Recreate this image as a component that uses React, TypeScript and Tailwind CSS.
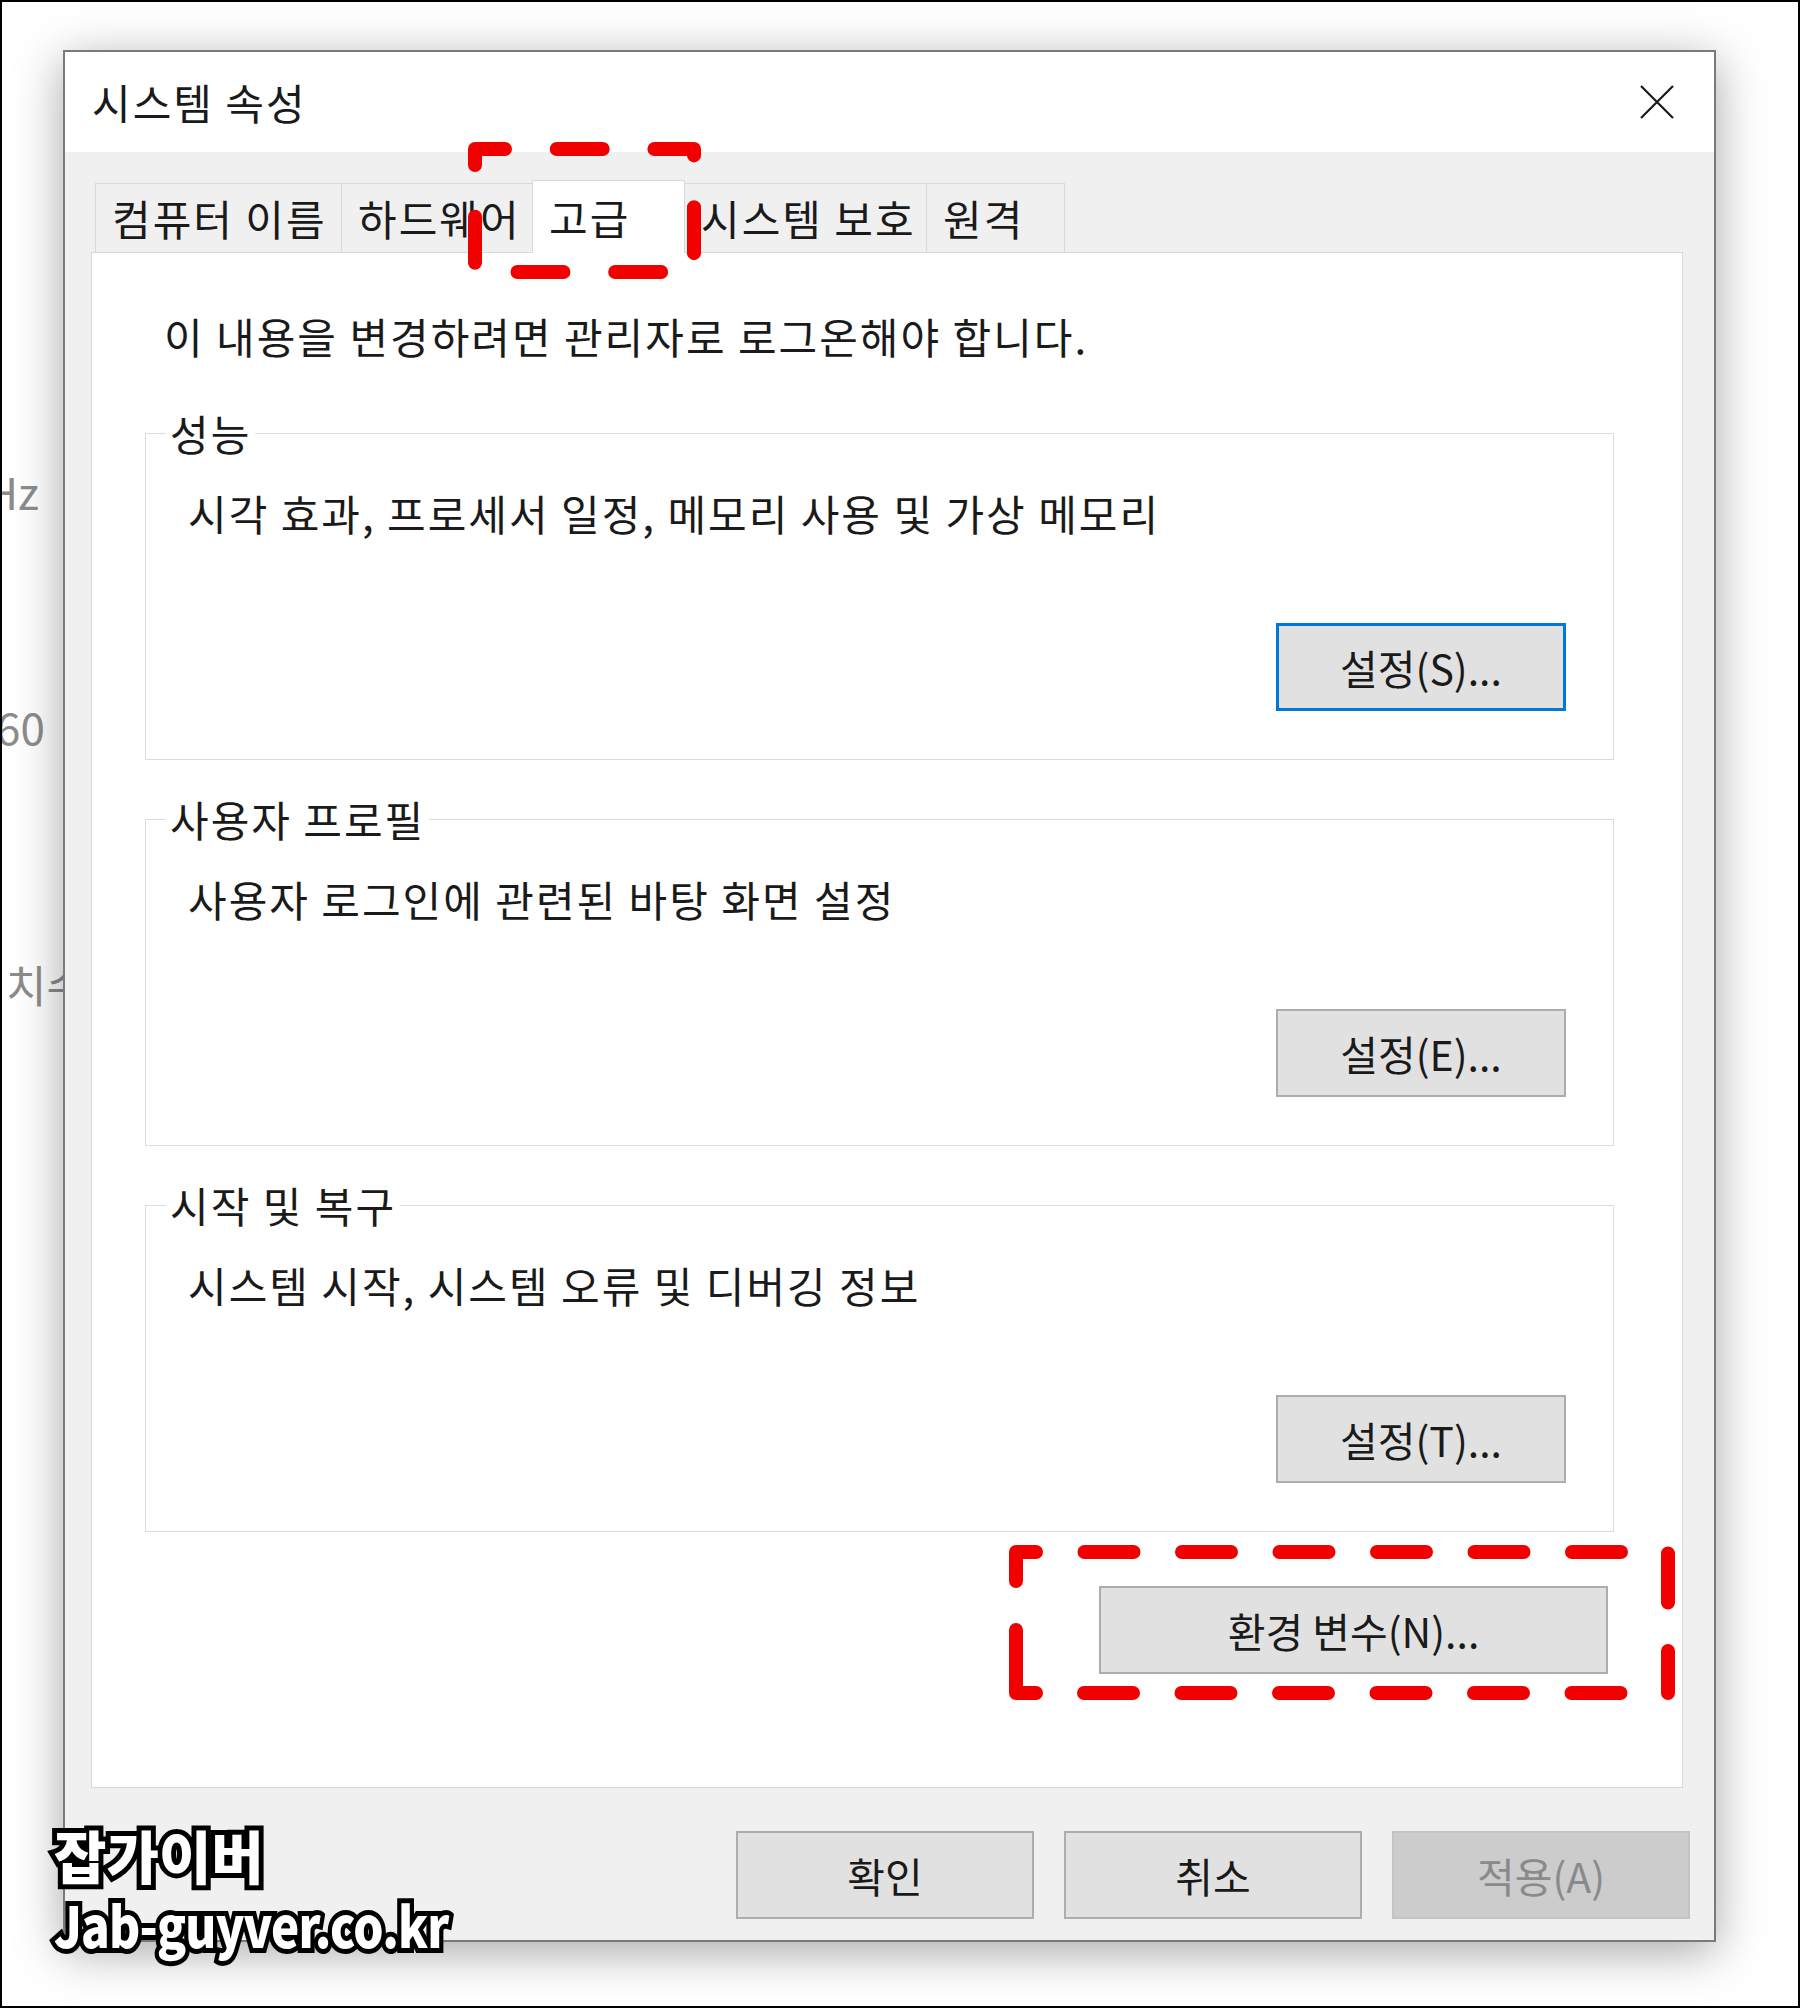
import React from "react";
import clsx from "clsx";

const tabs = [
  { label: "컴퓨터 이름", width: "w-[247px]", active: false },
  { label: "하드웨어", width: "w-[192px]", active: false },
  { label: "고급", width: "w-[153px]", active: true },
  { label: "시스템 보호", width: "w-[243px]", active: false },
  { label: "원격", width: "w-[139px]", active: false },
];

const groups = [
  { title: "성능", desc: "시각 효과, 프로세서 일정, 메모리 사용 및 가상 메모리", button: "설정(S)...", focused: true },
  { title: "사용자 프로필", desc: "사용자 로그인에 관련된 바탕 화면 설정", button: "설정(E)...", focused: false },
  { title: "시작 및 복구", desc: "시스템 시작, 시스템 오류 및 디버깅 정보", button: "설정(T)...", focused: false },
];

// 대화상자 기본 글자 (맑은 고딕보다 좁아서 자간으로 보정)
const label = "text-[42px] leading-[40px] tracking-[2px]";

type BtnProps = { label: string; focused?: boolean; disabled?: boolean; className?: string };

/** 윈도우 기본 버튼 */
const WinButton = ({ label, focused, disabled, className }: BtnProps) => (
  <button
    type="button"
    className={clsx(
      "flex h-[88px] items-center justify-center text-[41px] leading-none",
      focused && "border-[3px] border-[#0078d7] bg-[#e1e1e1] text-[#1a1a1a]",
      disabled && "border-2 border-[#c4c4c4] bg-[#cccccc] text-[#8a8a8a]",
      !focused && !disabled && "border-2 border-[#adadad] bg-[#e1e1e1] text-[#1a1a1a]",
      className
    )}
  >
    {label}
  </button>
);

export default function App() {
  return (
    <div className="relative h-[2008px] w-[1800px] overflow-hidden border-2 border-black bg-white pl-[61px] pt-[48px] font-['Noto_Sans_CJK_KR','Noto_Sans',sans-serif] text-[#1a1a1a]">
      {/* 뒤쪽 창 글자 */}
      <div className="absolute left-[-16px] top-[467px] text-[44px] leading-none text-[#8c8c8c]">Hz</div>
      <div className="absolute left-[-6px] top-[702px] text-[44px] leading-none text-[#8c8c8c]">60</div>
      <div className="absolute left-[4px] top-[960px] text-[44px] leading-none text-[#8c8c8c]">치수</div>

      {/* 시스템 속성 대화상자 */}
      <div className="relative z-10 flex h-[1892px] w-[1653px] flex-col border-2 border-[#7a7a7a] bg-[#f0f0f0] shadow-[0_10px_45px_rgba(0,0,0,0.35)]">
        <div className="flex h-[100px] items-center justify-between bg-white pl-[27px] pr-[40px]">
          <span className={label}>시스템 속성</span>
          <svg width="34" height="34" viewBox="0 0 34 34" className="text-[#1a1a1a]">
            <path d="M1 1 L33 33 M33 1 L1 33" stroke="currentColor" strokeWidth="2.2" fill="none" />
          </svg>
        </div>

        <div className="flex flex-1 flex-col pl-[26px] pt-[28px]">
          {/* 탭 */}
          <div className="flex h-[72px] items-end pl-[4px]">
            {tabs.map((t, i) => (
              <div
                key={t.label}
                className={clsx(
                  "flex items-center border border-b-0 border-[#d9d9d9] pl-[16px]",
                  label,
                  t.width,
                  i > 0 && "-ml-px",
                  t.active ? "relative z-10 -mb-px h-[73px] bg-white" : "h-[69px] bg-[#f0f0f0]"
                )}
              >
                {t.label}
              </div>
            ))}
          </div>

          {/* 탭 내용 */}
          <div className="flex h-[1536px] w-[1592px] flex-col border border-[#d9d9d9] bg-white">
            <p className={clsx("ml-[72px] mt-[63px]", label)}>이 내용을 변경하려면 관리자로 로그온해야 합니다.</p>

            <div className="ml-[53px] flex w-[1469px] flex-col">
              {groups.map((g, i) => (
                <fieldset key={g.title} className={clsx("border border-[#dcdcdc]", i === 0 ? "mt-[57px]" : "mt-[39px]")}>
                  <legend className={clsx("ml-[20px] px-[4px]", label)}>{g.title}</legend>
                  <div className="flex flex-col pb-[48px] pl-[42px] pr-[47px] pt-[40px]">
                    <p className={label}>{g.desc}</p>
                    <WinButton label={g.button} focused={g.focused} className="mt-[90px] w-[290px] self-end" />
                  </div>
                </fieldset>
              ))}
            </div>

            <WinButton label="환경 변수(N)..." className="mr-[74px] mt-[54px] w-[509px] self-end" />
          </div>

          {/* 확인 / 취소 / 적용 */}
          <div className="mt-[43px] flex justify-end gap-[30px] pr-[24px]">
            <WinButton label="확인" className="w-[298px]" />
            <WinButton label="취소" className="w-[298px]" />
            <WinButton label="적용(A)" disabled className="w-[298px]" />
          </div>
        </div>
      </div>

      {/* 빨간 점선 표시 */}
      <svg className="absolute left-[458px] top-[132px] z-20" width="250" height="154" viewBox="0 0 250 154" fill="none">
        <path d="M15 31 V15 H234 V138 H15 Z" stroke="#f10000" strokeWidth="14" strokeLinecap="round" strokeLinejoin="round" strokeDasharray="46 51.71" />
      </svg>
      <svg className="absolute left-[998px] top-[1534px] z-20" width="684" height="175" viewBox="0 0 684 175" fill="none" stroke="#f10000" strokeWidth="14" strokeLinecap="round" strokeLinejoin="round">
        <path d="M16 45 V16 H668 V157" strokeDasharray="49 48.5" />
        <path d="M16 94 V157 H668" strokeDasharray="83 48 49 48.5 49 48.5 49 48.5 49 48.5 49 48.5 49 48.5 49 48.5" />
      </svg>

      {/* 워터마크 */}
      <div className="absolute left-[52px] top-[1824px] z-20 flex flex-col font-black text-white [-webkit-text-stroke:10px_#000] [paint-order:stroke_fill]">
        <span className="text-[57px] leading-none">잡가이버</span>
        <span className="mt-[13px] origin-left scale-x-[0.85] text-[56px] leading-none tracking-[-1px]">Jab-guyver.co.kr</span>
      </div>
    </div>
  );
}
